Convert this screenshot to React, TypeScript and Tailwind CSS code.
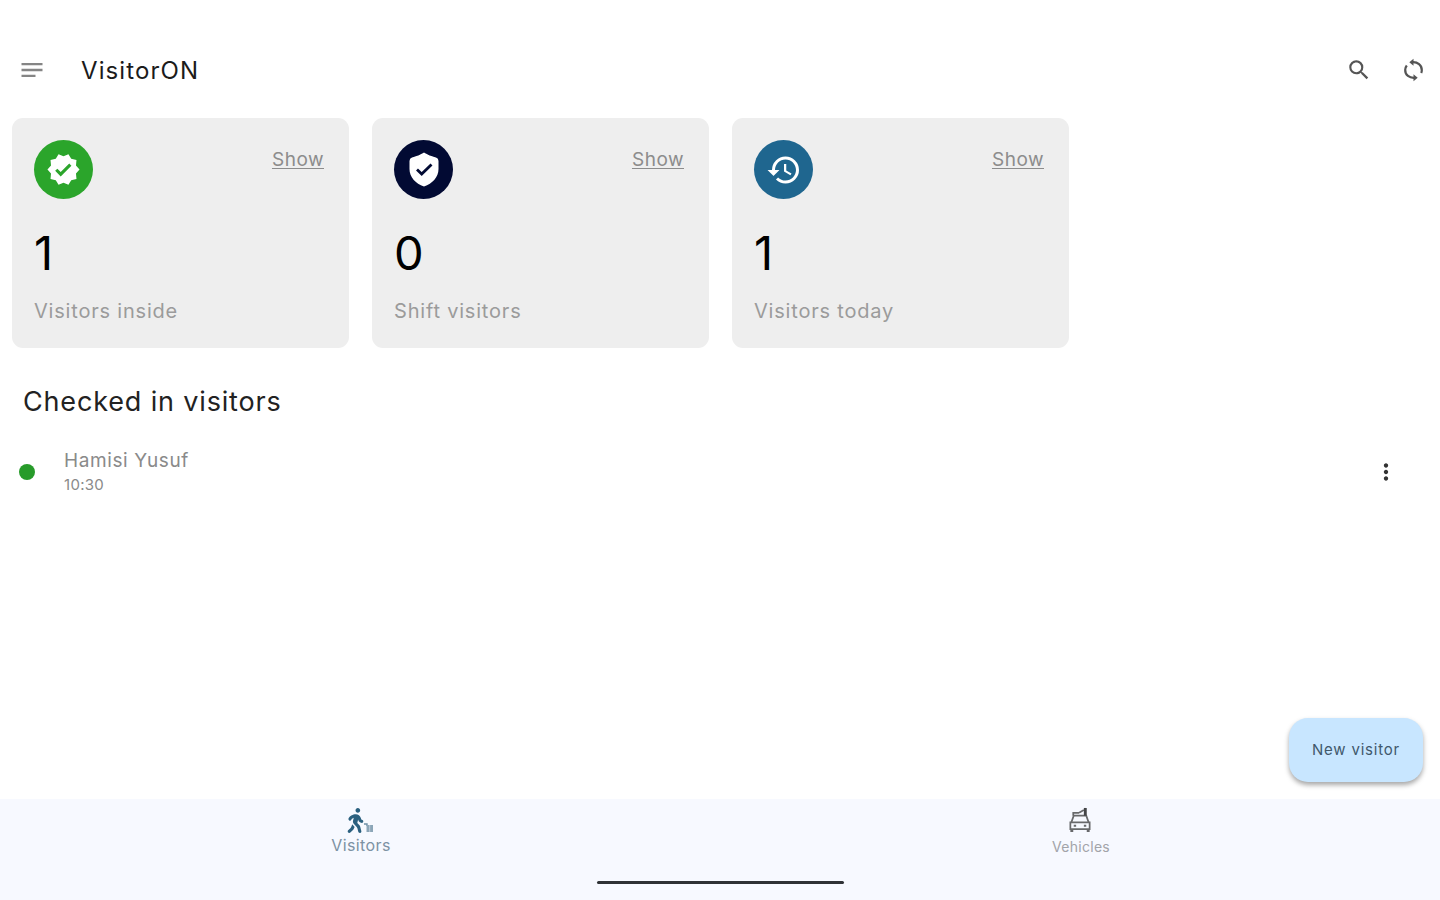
import type { ReactNode } from "react";
import { FaWalking } from "react-icons/fa";
import {
  MdHistory,
  MdMoreVert,
  MdNotes,
  MdSearch,
  MdVerified,
} from "react-icons/md";

export default function App() {
  return (
    <div className="flex h-[900px] w-[1440px] flex-col overflow-hidden bg-white font-['Inter',sans-serif] text-[#1b1b1b]">
      <TopBar />

      <main className="flex flex-1 flex-col">
        {/* Stat cards */}
        <div className="flex gap-[23px] pl-3">
          <StatCard
            badge="bg-[#2ba52b]"
            icon={<MdVerified size={35} />}
            value="1"
            label="Visitors inside"
          />
          <StatCard
            badge="bg-[#020a33]"
            icon={<ShieldIcon />}
            value="0"
            label="Shift visitors"
          />
          <StatCard
            badge="bg-[#1f668f]"
            icon={<MdHistory size={36} />}
            value="1"
            label="Visitors today"
          />
        </div>

        <h2 className="mt-[34px] pl-[23px] text-[27px] leading-10 tracking-[0.84px] text-[#222]">
          Checked in visitors
        </h2>

        <VisitorRow name="Hamisi Yusuf" time="10:30" />

        <button className="mt-auto mr-[17px] mb-[17px] h-[64px] w-[134px] self-end rounded-[19px] bg-[#c8e6ff] text-[15px] tracking-[0.8px] text-[#41586b] shadow-[0_3px_5px_rgba(0,0,0,0.35)]">
          New visitor
        </button>
      </main>

      <BottomNav />
    </div>
  );
}

function TopBar() {
  return (
    <header className="flex h-[118px] shrink-0 items-center pt-[22px] pr-[16px] pl-[18px]">
      <MdNotes size={28} className="-mt-px text-[#858585]" />
      <h1 className="mt-px ml-[35px] text-[24px] tracking-[1.1px]">
        VisitorON
      </h1>
      <div className="ml-auto flex items-center gap-[31px] text-[#555]">
        <MdSearch size={26} />
        <SyncIcon />
      </div>
    </header>
  );
}

function StatCard({
  badge,
  icon,
  value,
  label,
}: {
  badge: string;
  icon: ReactNode;
  value: string;
  label: string;
}) {
  return (
    <div className="h-[230px] w-[337px] rounded-[11px] bg-[#eeeeee] pt-[22px] pr-[25px] pl-[22px]">
      <div className="flex items-start justify-between">
        <div
          className={`flex size-[59px] items-center justify-center rounded-full text-white ${badge}`}
        >
          {icon}
        </div>
        <a className="mt-[6px] text-[19px] leading-7 tracking-[0.5px] text-[#8c8c8c] underline underline-offset-2">
          Show
        </a>
      </div>
      <div className="mt-[25px] text-[47px] leading-[58px] text-black">
        {value}
      </div>
      <div className="mt-[15px] text-[20px] leading-7 tracking-[0.8px] text-[#9b9b9b]">
        {label}
      </div>
    </div>
  );
}

function VisitorRow({ name, time }: { name: string; time: string }) {
  return (
    <div className="mt-[27px] flex items-center pr-[41px] pl-[19px]">
      <span className="-mt-[2px] size-4 rounded-full bg-[#279b2a]" />
      <div className="ml-[29px]">
        <p className="text-[19px] leading-6 tracking-[0.6px] text-[#8a8a8a]">
          {name}
        </p>
        <p className="text-[15px] leading-6 tracking-[0.3px] text-[#8a8a8a]">
          {time}
        </p>
      </div>
      <MdMoreVert size={26} className="-mt-[2px] ml-auto text-[#333]" />
    </div>
  );
}

function BottomNav() {
  return (
    <nav className="flex h-[101px] shrink-0 flex-col bg-[#f7f9ff]">
      <div className="flex">
        <div className="flex flex-1 flex-col items-center pt-[9px]">
          <div className="flex items-end">
            <FaWalking size={25} className="-mr-1 -ml-1 text-[#2b607f]" />
            <LuggageIcon />
          </div>
          <span className="pl-[2px] text-[16px] leading-6 tracking-[0.4px] text-[#7d92a3]">
            Visitors
          </span>
        </div>
        <div className="flex flex-1 flex-col items-center pt-[8px]">
          <CarIcon />
          <span className="pt-px pl-[2px] text-[14px] leading-6 tracking-[0.3px] text-[#a2a4a9]">
            Vehicles
          </span>
        </div>
      </div>
      <div className="mt-auto mb-4 h-[3px] w-[247px] shrink-0 self-center rounded-full bg-[#2f3236]" />
    </nav>
  );
}

/* ---- Icons ---- */

function SyncIcon() {
  return (
    <svg width="21" height="24" viewBox="0 0 21 24" fill="none">
      <path
        d="M9 4.2C14.5 3.6 19 7 18.8 12.2Q18.8 13.6 18.2 15"
        stroke="currentColor"
        strokeWidth="2.2"
      />
      <path
        d="M12 19.8C6.500 20.4 2 17 2.200 11.8Q2.200 9.600 3.800 7.500"
        stroke="currentColor"
        strokeWidth="2.200"
      />
      <path d="M10.500 0.800V7.800L6.300 4.300Z" fill="currentColor" />
      <path d="M10.500 16.200V23.200L14.700 19.700Z" fill="currentColor" />
    </svg>
  );
}

function ShieldIcon() {
  return (
    <svg width="30" height="35" viewBox="0 0 30 35" fill="none">
      <path
        d="M15 0.5C17 1.8 20 3.5 27 5.5Q29.5 6.3 29.5 9V17C29.5 25 23.5 31.5 15 34.5C6.5 31.5 0.5 25 0.5 17V9Q0.5 6.3 3 5.5C10 3.5 13 1.8 15 0.5Z"
        fill="currentColor"
      />
      <path d="M8 17.5L12.7 22L22.5 12.5" stroke="#020a33" strokeWidth="2.8" />
    </svg>
  );
}

function LuggageIcon() {
  return (
    <svg width="10" height="11" viewBox="0 0 10 11" fill="none">
      <path d="M0 2H3V4" stroke="#6d8ea5" strokeWidth="1.4" />
      <path d="M2.500 3H9V10H2.500Z" fill="#8ca6b8" />
      <path d="M5.700 3V10" stroke="#c9d6e2" strokeWidth="0.8" />
    </svg>
  );
}

function CarIcon() {
  return (
    <svg width="26" height="27" viewBox="0 0 26 28" fill="none" stroke="#68696b">
      <path d="M4 16L6.5 9H19.5L22 16" strokeWidth="1.8" />
      <path d="M3 16H23V23H3Z" strokeWidth="1.8" />
      <path d="M4.5 23V26M21.5 23V26" strokeWidth="3" />
      <path d="M6.5 19.5H9M17 19.5H19.5" strokeWidth="2" />
      <path d="M6 9V6H12M12 6L17 3" strokeWidth="1.8" />
      <path d="M18.5 1V9" stroke="#444547" strokeWidth="3" />
    </svg>
  );
}
